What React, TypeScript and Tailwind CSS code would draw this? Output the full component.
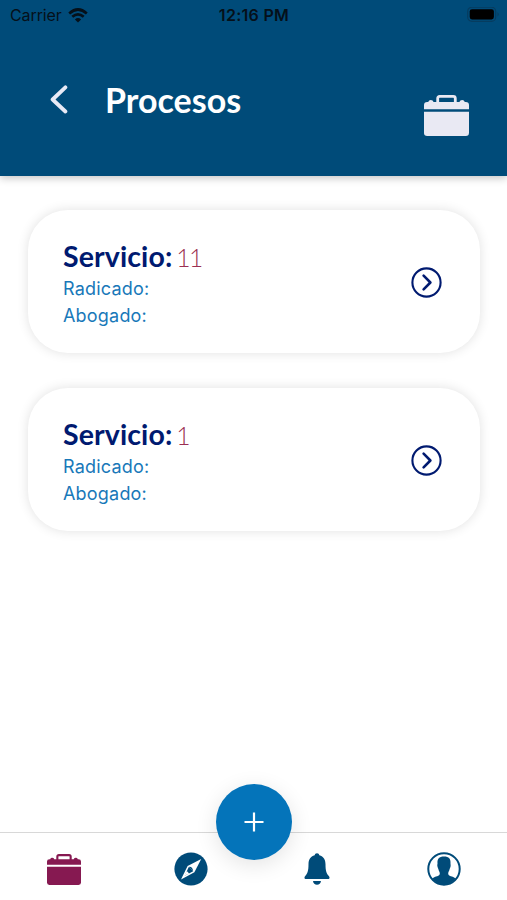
import { ReactNode } from 'react'

const processes = [
  { id: 1, service: '11', filing: '', lawyer: '' },
  { id: 2, service: '1', filing: '', lawyer: '' },
]

const Briefcase = ({ className }: { className: string }) => (
  <svg viewBox="0 0 45 41" className={className} fill="currentColor">
    <path d="M13.7 8V3.4Q13.7 1.4 15.7 1.4H29.3Q31.3 1.4 31.3 3.4V8" fill="none" stroke="currentColor" strokeWidth="2.8" />
    <path d="M0 14.2V10Q0 6.9 3.2 6.9H4.2Q4.8 5.1 6.8 5.1Q9 5.1 9.6 6.9H35.4Q36 5.1 38.2 5.1Q40.2 5.1 40.8 6.9H41.8Q45 6.9 45 10V14.2Z" />
    <path d="M0 16.8H45V37.8Q45 41 41.8 41H3.2Q0 41 0 37.8Z" />
  </svg>
)

const Compass = () => (
  <svg viewBox="0 0 34 34" className="h-[34px] w-[34px]">
    <circle cx="17" cy="17" r="16.6" fill="#004b79" />
    <path d="M27.2 7L20.4 20.2L7 27.4L13.6 13.9Z" fill="#fff" />
    <path d="M14.8 14.9L19.2 19.3L10.6 23.8Z" fill="#004b79" />
    <path d="M14.8 14.9Q18.3 14.2 19.2 19.3Z" fill="#004b79" />
    <path d="M12.8 19.1L15.2 21.4L10 24Z" fill="#fff" />
  </svg>
)

const Bell = () => (
  <svg viewBox="0 0 26 32" className="h-8 w-[26px]" fill="#004b79">
    <path d="M13 .2C14.4 .2 15.1 1 15.3 2.2C19.7 3.3 21.5 6.7 21.5 11.2C21.5 18.2 22.6 20.4 24.6 22.7C26.2 24.4 25.6 26.1 24 26.1H2C.4 26.1-.2 24.4 1.4 22.7C3.4 20.4 4.5 18.2 4.5 11.2C4.5 6.7 6.3 3.3 10.7 2.2C10.9 1 11.6 .2 13 .2Z" />
    <path d="M9 28H17C16.6 30.5 15.2 31.8 13 31.8S9.4 30.5 9 28Z" />
  </svg>
)

const Contact = () => (
  <svg viewBox="0 0 34 34" className="h-[34px] w-[34px]">
    <circle cx="17" cy="17" r="15.7" fill="#fff" stroke="#004b79" strokeWidth="2" />
    <path d="M17 4.6C22 4.6 23.9 7.2 23.5 11.2C23.4 12.3 23.9 12.6 23.6 14.3C23.3 15.9 22.8 16.2 22.5 17.5C22.1 19.3 21.2 20 21.2 21.5C21.2 24.4 25.6 24 28.8 26.6C26 30.7 21.8 32.7 17 32.7S8 30.7 5.2 26.6C8.4 24 12.8 24.4 12.8 21.5C12.8 20 11.9 19.3 11.5 17.5C11.2 16.2 10.7 15.9 10.4 14.3C10.1 12.6 10.6 12.3 10.5 11.2C10.1 7.2 12 4.6 17 4.6Z" fill="#004b79" />
  </svg>
)

const StatusBar = () => (
  <div className="grid h-[30px] grid-cols-3 items-center pl-[10px] pr-[7px] font-['Inter',sans-serif] text-[16px] leading-[30px] text-[#051019]">
    <div className="flex items-center gap-[6px]">
      <span className="w-[52px] tracking-[-0.1px]">Carrier</span>
      <svg viewBox="0 0 20 15" className="h-[15px] w-5" fill="none" stroke="currentColor" strokeWidth="2.7">
        <path d="M1.2 5.4Q10-2.4 18.8 5.4" />
        <path d="M4.3 8.8Q10 3.9 15.7 8.8" />
        <path d="M10 14.4L6.9 11.4Q10 8.7 13.1 11.4Z" fill="currentColor" stroke="none" />
      </svg>
    </div>
    <div className="whitespace-nowrap pr-[2px] text-center font-semibold tracking-[0.3px]">12:16 PM</div>
    <div className="flex justify-end">
      <svg viewBox="0 0 33 16" className="h-4 w-[33px]">
        <rect x=".7" y=".2" width="28" height="14.2" rx="4.2" fill="none" stroke="#063c5f" strokeWidth="1.2" />
        <rect x="2.7" y="2.2" width="24.2" height="10.2" rx="2.3" fill="#000" />
        <path d="M30.5 5Q33 7.3 30.5 9.5Z" fill="#063c5f" />
      </svg>
    </div>
  </div>
)

const Header = () => (
  <header className="h-[175.5px] bg-[#004b79] shadow-[0_2px_8px_rgba(0,0,0,0.24)]">
    <StatusBar />
    <div className="flex items-start pl-[50px] pr-[38px] pt-[50px]">
      <button className="mt-[4px]" aria-label="Volver">
        <svg viewBox="0 0 19 30" className="h-[30px] w-[19px]" fill="none" stroke="#e8eaf6" strokeWidth="3.8" strokeLinecap="round" strokeLinejoin="round">
          <path d="M15.4 3.3L2.6 15.5L15.4 27.5" />
        </svg>
      </button>
      <h1 className="ml-[36px] font-['Lato',sans-serif] text-[34px] font-bold leading-[40px] text-white">Procesos</h1>
      <Briefcase className="ml-auto mt-[15px] h-[41px] w-[45px] text-[#e9e9f3]" />
    </div>
  </header>
)

const ProcessCard = ({ service, filing, lawyer }: { service: string; filing: string; lawyer: string }) => (
  <div className="flex h-[143px] items-center justify-between rounded-[40px] bg-white pl-[35px] pr-[38px] shadow-[0_0_12px_rgba(0,0,0,0.12)]">
    <div className="pt-[3px] font-['Inter',sans-serif] text-[18px] leading-[27px] tracking-[0.2px] text-[#1878b9]">
      <div className="flex items-baseline gap-[4px] pt-[2px] font-['Lato',sans-serif] leading-[34px]">
        <h2 className="text-[28.5px] font-bold tracking-[0.1px] text-[#001a70]">Servicio:</h2>
        <span className="text-[24.5px] font-light tracking-[-1.5px] text-[#9b2f52]">{service}</span>
      </div>
      <p>Radicado: {filing}</p>
      <p>Abogado: {lawyer}</p>
    </div>
    <svg viewBox="0 0 31 31" className="mt-px h-[31px] w-[31px]" fill="none" stroke="#001a70">
      <circle cx="15.5" cy="15.5" r="14.1" strokeWidth="2.1" />
      <path d="M12.6 8.7L19.4 15.5L12.6 22.4" strokeWidth="2.6" strokeLinecap="round" strokeLinejoin="round" />
    </svg>
  </div>
)

const Tab = ({ label, children }: { label: string; children: ReactNode }) => (
  <button className="flex items-center justify-center pl-[1px] pt-[5px]" aria-label={label}>
    {children}
  </button>
)

const App = () => {
  return (
    <div className="flex h-[900px] w-[507px] flex-col overflow-hidden bg-white">
      <Header />
      <main className="flex flex-1 flex-col gap-[35px] pl-[28px] pr-[27px] pt-[34.5px]">
        {processes.map((p) => (
          <ProcessCard key={p.id} service={p.service} filing={p.filing} lawyer={p.lawyer} />
        ))}
      </main>
      <nav className="relative grid h-[68px] grid-cols-4 border-t border-[#d8d8d8] bg-white">
        <Tab label="Procesos">
          <Briefcase className="h-[31px] w-[34px] text-[#861951]" />
        </Tab>
        <Tab label="Explorar">
          <Compass />
        </Tab>
        <Tab label="Notificaciones">
          <Bell />
        </Tab>
        <Tab label="Perfil">
          <Contact />
        </Tab>
        {/* floating add button over the tab bar */}
        <button className="absolute -top-[49px] left-[216px] flex h-[76px] w-[76px] items-center justify-center rounded-full bg-[#0474ba] shadow-[0_5px_22px_rgba(0,0,0,0.11)]" aria-label="Agregar">
          <svg viewBox="0 0 20 20" className="h-5 w-5" stroke="#fff" strokeWidth="2.2">
            <path d="M10 .5V19.5M.5 10H19.5" />
          </svg>
        </button>
      </nav>
    </div>
  )
}

export default App
